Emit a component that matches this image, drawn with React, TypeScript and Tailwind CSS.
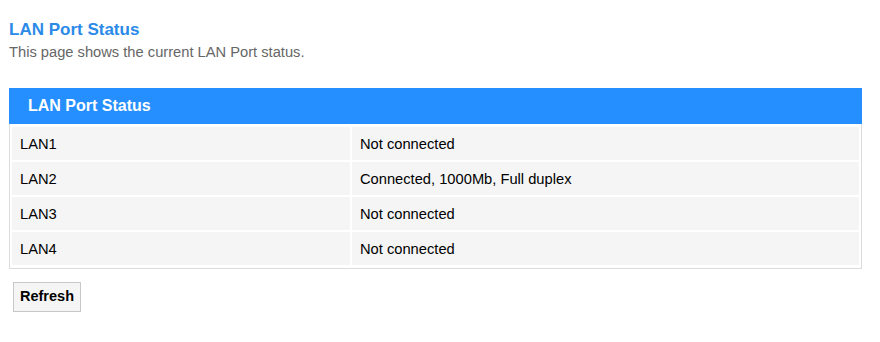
import React from "react";

const ports = [
  { name: "LAN1", status: "Not connected" },
  { name: "LAN2", status: "Connected, 1000Mb, Full duplex" },
  { name: "LAN3", status: "Not connected" },
  { name: "LAN4", status: "Not connected" },
];

export default function App() {
  return (
    <div className="min-h-[342px] bg-white pl-[9px] pr-[18px] pt-[20px] font-['Liberation_Sans',Arial,sans-serif]">
      {/* page title */}
      <h1 className="text-[17px] leading-[20px] font-bold text-[#2b8ae8]">LAN Port Status</h1>
      <p className="mt-[4px] text-[14.7px] leading-[17px] text-[#666]">
        This page shows the current LAN Port status.
      </p>

      {/* status box */}
      <div className="mt-[27px] w-[853px]">
        <div className="flex h-[36px] items-center bg-[#258fff] pl-[19px] text-[16px] font-bold text-white">
          LAN Port Status
        </div>
        <div className="border border-t-0 border-[#dcdcdc] pt-px pb-px">
          <table className="w-full border-separate border-spacing-0.5 text-[14.7px] text-black">
            <tbody>
              {ports.map((p) => (
                <tr key={p.name}>
                  <td className="h-[33px] w-[40%] bg-[#f5f5f5] px-[8px] pt-[2px] pb-0">{p.name}</td>
                  <td className="h-[33px] bg-[#f5f5f5] px-[8px] pt-[2px] pb-0">{p.status}</td>
                </tr>
              ))}
            </tbody>
          </table>
        </div>
      </div>

      <button className="ml-[4px] mt-[13px] h-[30px] border border-[#c8c8c8] bg-[#f5f5f5] px-[6px] text-[14.5px] font-bold text-black">
        Refresh
      </button>
    </div>
  );
}
